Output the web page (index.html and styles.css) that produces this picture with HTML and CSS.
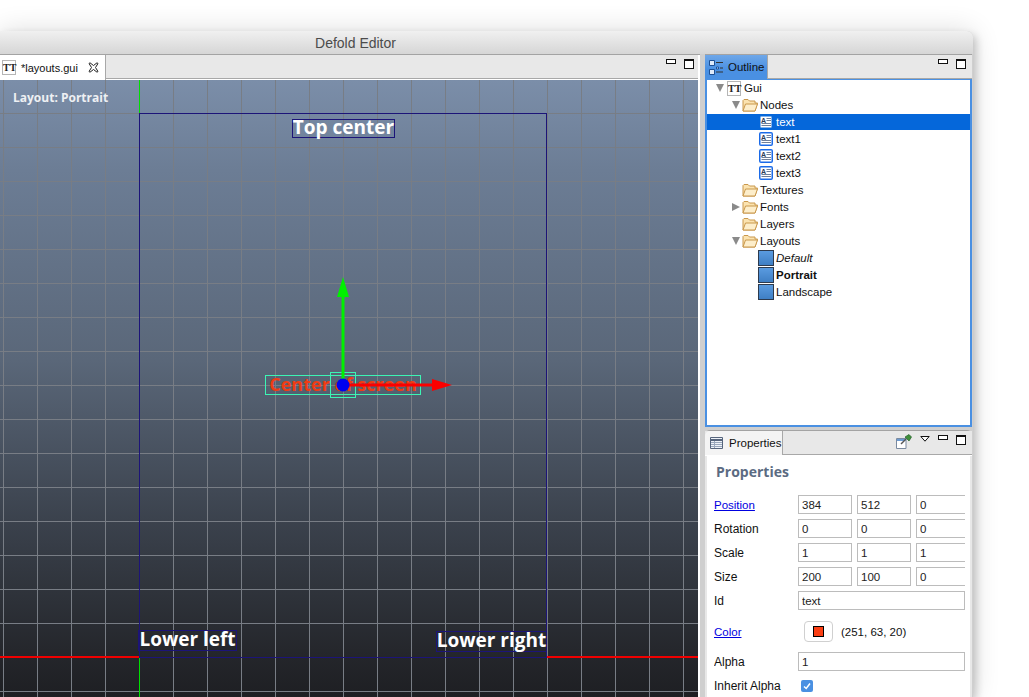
FILE: index.html
```html
<!DOCTYPE html>
<html>
<head>
    <title>Defold Editor</title>
    <link rel="stylesheet" href="styles.css">
</head>
<body>
    <svg class="defs" width="0" height="0">
        <symbol id="folder" viewBox="0 0 16 14">
            <path d="M1 13V2.5L2 1.5H6L7.5 3H13V5H15.5L13 13Z" fill="#fbe3b0" stroke="#c9984c"/>
            <path d="M1 13L3.5 6H15.5L13 13Z" fill="#fdeecb" stroke="#c9984c"/>
        </symbol>
        <symbol id="textnode" viewBox="0 0 14 14">
            <rect x="1.500" y="1.500" width="11" height="11" fill="#fff"/>
            <text x="2" y="7.500" class="glyph-a">A</text>
            <path d="M7.500 3.500H12M7.500 5.500H12M2.500 8.500H12M2.500 10.500H12" stroke="#6f7f9a"/>
        </symbol>
    </svg>

    <div class="window">
        <div class="titlebar">Defold Editor</div>
        <div class="workbench">
            <div class="panel editor">
                <div class="tabstrip">
                    <div class="tab tab-editor">
                        <span class="tt-icon">TT</span>
                        <span>*layouts.gui</span>
                        <svg class="close" width="11" height="11" viewBox="0 0 11 11">
                            <path d="M1 1.500L2 .8 5.500 3.500 9 .8 10 1.500 7.500 5.500 10 9.500 9 10.200 5.500 7.500 2 10.200 1 9.500 3.500 5.500Z" fill="#fff" stroke="#222" stroke-width="1"/>
                        </svg>
                    </div>
                    <div class="win-buttons">
                        <span class="btn-min"></span>
                        <span class="btn-max"></span>
                    </div>
                </div>
                <div class="canvas">
                    <div class="layout-name">Layout: Portrait</div>
                    <div class="axis axis-y axis-y-top"></div>
                    <div class="axis axis-y axis-y-bottom"></div>
                    <div class="axis axis-x axis-x-left"></div>
                    <div class="axis axis-x axis-x-right"></div>
                    <div class="frame"></div>
                    <div class="node node-top">Top center</div>
                    <div class="node node-left">Lower left</div>
                    <div class="node node-right">Lower right</div>
                    <div class="node node-center">Center of screen</div>
                    <svg class="gizmo" width="200" height="130" viewBox="0 0 200 130">
                        <rect x="70.500" y="97.500" width="25" height="25" fill="none" stroke="#3cf5b4"/>
                        <rect x="81.500" y="20" width="3" height="90" fill="#00f000"/>
                        <path d="M83 2L89 22H77Z" fill="#00f000"/>
                        <rect x="88" y="108.500" width="90" height="3" fill="#fa0000"/>
                        <path d="M192 110L172 104V116Z" fill="#fa0000"/>
                        <circle cx="83" cy="110" r="6.500" fill="#0000f0"/>
                    </svg>
                </div>
            </div>

            <div class="side">
                <div class="panel outline">
                    <div class="tabstrip">
                        <div class="tab tab-outline">
                            <svg width="15" height="15" viewBox="0 0 15 15">
                                <path d="M.5 .5H5.500V5.500H.5ZM.5 9.500H5.500V14.500H.5ZM7.500 7H9.500V9H7.500Z" fill="#dfeafa" stroke="#1d4f94"/>
                                <path d="M7 2.500H14M11 8H14M7 12H14" stroke="#333"/>
                            </svg>
                            <span>Outline</span>
                        </div>
                        <div class="win-buttons">
                            <span class="btn-min"></span>
                            <span class="btn-max"></span>
                        </div>
                    </div>
                    <div class="tree">
                        <div class="row level-0"><i class="twist open"></i><span class="tt-icon">TT</span><span>Gui</span></div>
                        <div class="row level-1"><i class="twist open"></i><svg class="folder"><use href="#folder"/></svg><span>Nodes</span></div>
                        <div class="row level-2 selected"><svg class="textnode"><use href="#textnode"/></svg><span>text</span></div>
                        <div class="row level-2"><svg class="textnode boxed"><use href="#textnode"/></svg><span>text1</span></div>
                        <div class="row level-2"><svg class="textnode boxed"><use href="#textnode"/></svg><span>text2</span></div>
                        <div class="row level-2"><svg class="textnode boxed"><use href="#textnode"/></svg><span>text3</span></div>
                        <div class="row level-1"><i class="twist"></i><svg class="folder"><use href="#folder"/></svg><span>Textures</span></div>
                        <div class="row level-1"><i class="twist closed"></i><svg class="folder"><use href="#folder"/></svg><span>Fonts</span></div>
                        <div class="row level-1"><i class="twist"></i><svg class="folder"><use href="#folder"/></svg><span>Layers</span></div>
                        <div class="row level-1"><i class="twist open"></i><svg class="folder"><use href="#folder"/></svg><span>Layouts</span></div>
                        <div class="row level-2"><i class="layout-icon"></i><em>Default</em></div>
                        <div class="row level-2"><i class="layout-icon"></i><b>Portrait</b></div>
                        <div class="row level-2"><i class="layout-icon"></i><span>Landscape</span></div>
                    </div>
                </div>

                <div class="panel properties">
                    <div class="tabstrip">
                        <div class="tab tab-props">
                            <svg width="13" height="12" viewBox="0 0 13 12">
                                <path d="M.5 .5H12.500V11.500H.5Z" fill="#eef2f8" stroke="#56657c"/>
                                <path d="M1 3H12" stroke="#56657c" stroke-width="2"/>
                                <path d="M1 5.500H12M1 7.500H12M1 9.500H12M4.500 4V11" stroke="#9aa8bc"/>
                            </svg>
                            <span>Properties</span>
                        </div>
                        <div class="win-buttons">
                            <svg class="pin" width="16" height="15" viewBox="0 0 16 15">
                                <path d="M.5 4.500H10V14.500H.5Z" fill="#fff" stroke="#7a8aa0"/>
                                <path d="M1 5H9.500V7H1Z" fill="#6d9bd1"/>
                                <path d="M5 10L10 5" stroke="#555" stroke-width="1.500"/>
                                <path d="M9 3L13 .5 15.500 3 13 7Z" fill="#3f8f3a" stroke="#23602a" stroke-width=".7"/>
                            </svg>
                            <svg class="menu" width="10" height="6" viewBox="0 0 10 6">
                                <path d="M.8 .5H9.200L5 5.200Z" fill="#fff" stroke="#111"/>
                            </svg>
                            <span class="btn-min"></span>
                            <span class="btn-max"></span>
                        </div>
                    </div>
                    <div class="props-body">
                        <h3>Properties</h3>
                        <div class="form">
                            <div class="field"><a>Position</a><input value="384"><input value="512"><input class="last" value="0"></div>
                            <div class="field"><label>Rotation</label><input value="0"><input value="0"><input class="last" value="0"></div>
                            <div class="field"><label>Scale</label><input value="1"><input value="1"><input class="last" value="1"></div>
                            <div class="field"><label>Size</label><input value="200"><input value="100"><input class="last" value="0"></div>
                            <div class="field"><label>Id</label><input class="wide" value="text"></div>
                            <div class="field field-color">
                                <a>Color</a>
                                <div class="color-btn"><span class="swatch"></span></div>
                                <span>(251, 63, 20)</span>
                            </div>
                            <div class="field field-alpha"><label>Alpha</label><input class="wide" value="1"></div>
                            <div class="field">
                                <label>Inherit Alpha</label>
                                <span class="check">
                                    <svg width="12" height="12" viewBox="0 0 12 12"><path d="M3 6.500L5.200 8.500 9 3.500" fill="none" stroke="#fff" stroke-width="1.500"/></svg>
                                </span>
                            </div>
                        </div>
                    </div>
                </div>
            </div>
        </div>
    </div>
</body>
</html>
```

FILE: styles.css
```css
html, body {
    margin: 0;
    height: 100%;
    overflow: hidden;
    background: #fff;
}
body {
    font-family: "Liberation Sans", Arial, sans-serif;
    font-size: 11px;
    color: #111;
    padding-top: 31px;
    box-sizing: border-box;
}
.defs {
    display: none;
}
.glyph-a {
    font-family: "Liberation Sans", Arial, sans-serif;
    font-size: 7px;
    font-weight: bold;
    fill: #2c3c58;
}

.window {
    width: 973px;
    height: 666px;
    background: #cfcfcf;
    border-radius: 0 6px 0 0;
    box-shadow: 0 0 28px rgba(0, 0, 0, .14), 3px 4px 8px rgba(0, 0, 0, .2);
}
.titlebar {
    height: 23px;
    line-height: 24px;
    padding-right: 262px;
    text-align: center;
    font-size: 14px;
    color: #4c4c4c;
    background: linear-gradient(#f0f0f0, #d6d6d6);
    border-radius: 0 6px 0 0;
    box-sizing: border-box;
}
.workbench {
    display: grid;
    grid-template-columns: 700px 267px;
    gap: 5px;
    height: 643px;
}
.side {
    display: flex;
    flex-direction: column;
    gap: 3px;
    min-height: 0;
}

.panel {
    display: flex;
    flex-direction: column;
    background: #fff;
    border-top: 1px solid #a3a3a3;
    min-height: 0;
}
.tabstrip {
    display: flex;
    justify-content: space-between;
    height: 23px;
    background: #e8e8e8;
    border-bottom: 1px solid #a8a8a8;
    flex: none;
}
.tab {
    display: flex;
    align-items: center;
    gap: 4px;
    height: 24px;
    box-sizing: border-box;
    padding-left: 3px;
    font-size: 11.500px;
    border-right: 1px solid #a8a8a8;
}
.tab-editor {
    width: 106px;
    height: 25px;
    padding-left: 2px;
    gap: 5px;
    background: #fff;
    font-size: 11px;
}
.tab-editor .close {
    margin-left: 5px;
}
.tab-outline {
    width: 63px;
    padding-left: 4px;
    background: linear-gradient(#6ea7e8, #4a90e2 60%, #4a90e2);
}
.tab-props {
    width: 78px;
    padding-left: 5px;
    gap: 6px;
    background: #f4f4f4;
    border-radius: 5px 0 0 0;
}
.win-buttons {
    display: flex;
    align-items: flex-start;
    gap: 8px;
    padding: 4px 6px 0 0;
}
.editor .win-buttons {
    padding-right: 4px;
}
.btn-min {
    width: 8px;
    height: 3px;
    border: 1px solid #111;
    background: #fff;
}
.btn-max {
    width: 8px;
    height: 7px;
    border: 1px solid #111;
    border-top-width: 2px;
    background: #fff;
}
.pin {
    margin: -1px 0 0 0;
}
.menu {
    margin: 1px 0 0 0;
}

.tt-icon {
    flex: none;
    width: 12px;
    height: 13px;
    line-height: 13px;
    text-align: center;
    border: 1px solid #b5b5b5;
    background: #fff;
    font-family: "Liberation Serif", serif;
    font-size: 10px;
    font-weight: bold;
    color: #222;
}

/* editor */
.editor {
    padding-right: 2px;
}
.canvas {
    position: relative;
    flex: 1;
    margin-top: 1px;
    overflow: hidden;
    background-color: #5a6779;
    background-image:
        linear-gradient(#787d85 1px, transparent 1px),
        linear-gradient(90deg, #787d85 1px, transparent 1px),
        linear-gradient(#7b8ea9 0, #6c7d95 90px, #5a6779 280px, #3b424d 440px, #25272c 570px, #1e1f23 617px);
    background-size: 34px 34px, 34px 34px, 100% 100%;
    background-position: 0 33px, 3px 0, 0 0;
}
.layout-name {
    position: absolute;
    left: 13px;
    top: 9px;
    color: #eef0f3;
    font-family: "Open Sans", sans-serif;
    font-size: 12px;
    font-weight: 700;
}
.frame {
    position: absolute;
    left: 139px;
    top: 33px;
    width: 406px;
    height: 543px;
    border: 1px solid #1c1478;
}
.axis {
    position: absolute;
}
.axis-y {
    left: 139px;
    width: 1px;
    background: #00e000;
}
.axis-y-top {
    top: 0;
    height: 33px;
}
.axis-y-bottom {
    top: 577px;
    bottom: 0;
}
.axis-x {
    top: 576px;
    height: 2px;
    background: #f00000;
}
.axis-x-left {
    left: 0;
    width: 139px;
}
.axis-x-right {
    left: 547px;
    right: 0;
}
.node {
    position: absolute;
    box-sizing: border-box;
    display: flex;
    align-items: center;
    justify-content: center;
    padding-bottom: 3px;
    font-family: "Open Sans", sans-serif;
    font-size: 19px;
    font-weight: 700;
    color: #fff;
    white-space: nowrap;
    border: 1px solid #1c1478;
}
.node-top {
    left: 292px;
    top: 39px;
    width: 103px;
    height: 19px;
}
.node-left {
    left: 138px;
    top: 550px;
    width: 99px;
    height: 21px;
}
.node-right {
    left: 436px;
    top: 551px;
    width: 111px;
    height: 21px;
}
.node-center {
    left: 265px;
    top: 295px;
    width: 156px;
    height: 20px;
    font-size: 18px;
    color: #f03c14;
    border-color: #3cf5b4;
}
.gizmo {
    position: absolute;
    left: 260px;
    top: 195px;
}

/* outline */
.outline {
    height: 372px;
    flex: none;
}
.tree {
    flex: 1;
    margin-top: 0;
    padding: 0;
    font-size: 11.500px;
    border: 2px solid #4a90e2;
    border-top: 1px solid #4a90e2;
}
.row {
    display: flex;
    align-items: center;
    height: 16px;
    margin-bottom: 1px;
    gap: 3px;
    white-space: nowrap;
}
.row .tt-icon {
    margin-left: 1px;
}
.level-0 {
    padding-left: 9px;
}
.level-1 {
    padding-left: 25px;
}
.level-2 {
    padding-left: 52px;
}
.selected {
    background: #0567da;
    color: #fff;
}
.twist {
    flex: none;
    width: 8px;
    height: 8px;
    margin-right: -1px;
}
.twist.open {
    width: 0;
    height: 0;
    border-left: 4px solid transparent;
    border-right: 4px solid transparent;
    border-top: 8px solid #8a8a8a;
}
.twist.closed {
    width: 0;
    height: 0;
    border-top: 4px solid transparent;
    border-bottom: 4px solid transparent;
    border-left: 8px solid #8a8a8a;
}
.folder {
    flex: none;
    width: 16px;
    height: 14px;
    margin-right: -1px;
}
.textnode {
    flex: none;
    width: 14px;
    height: 14px;
}
.textnode.boxed {
    background: #1a6ae8;
    border-radius: 2px;
}
.layout-icon {
    flex: none;
    width: 14px;
    height: 14px;
    margin: 0 -1px 0 -1px;
    border: 1px solid #2d3a4d;
    background: linear-gradient(#5a9be0, #3f7fc4);
}

/* properties */
.properties {
    flex: 1;
    border-radius: 5px 5px 0 0;
}
.props-body {
    flex: 1;
    min-height: 0;
    margin-top: 1px;
    padding: 0 0 0 7px;
    overflow: hidden;
    border-left: 2px solid #e8e8e8;
    border-right: 2px solid #e8e8e8;
}
.props-body h3 {
    margin: 6px 0 14px 2px;
    font-family: "Open Sans", sans-serif;
    font-size: 14px;
    line-height: 19px;
    font-weight: 700;
    color: #5b6b82;
}
.form {
    width: 251px;
    overflow: hidden;
    display: flex;
    flex-direction: column;
    gap: 5px;
}
.field {
    display: flex;
    align-items: center;
    height: 19px;
    font-size: 11.500px;
    white-space: nowrap;
}
.field > a, .field > label {
    flex: none;
    width: 84px;
}
.field > label {
    font-size: 12px;
}
.field a {
    color: #0000e0;
    text-decoration: underline;
}
.field input {
    flex: none;
    width: 54px;
    height: 19px;
    box-sizing: border-box;
    margin: 0 5px 0 0;
    padding: 0 3px;
    border: 1px solid #bcbcbc;
    background: #fff;
    font: inherit;
    color: #222;
    outline: none;
}
.field input.last {
    width: 60px;
}
.field input.wide {
    width: 167px;
    margin: 0;
}
.field-color {
    height: 21px;
    margin-top: 6px;
}
.color-btn {
    display: flex;
    align-items: center;
    justify-content: center;
    width: 29px;
    height: 21px;
    box-sizing: border-box;
    margin: 0 8px 0 6px;
    border: 1px solid #d0d0d0;
    border-radius: 4px;
    background: #fff;
}
.swatch {
    width: 9px;
    height: 9px;
    border: 1px solid #000;
    background: #fb3f14;
}
.field-alpha {
    margin-top: 5px;
}
.check {
    display: flex;
    width: 12px;
    height: 12px;
    margin-left: 3px;
    border-radius: 2px;
    background: #4a90e2;
}
```
